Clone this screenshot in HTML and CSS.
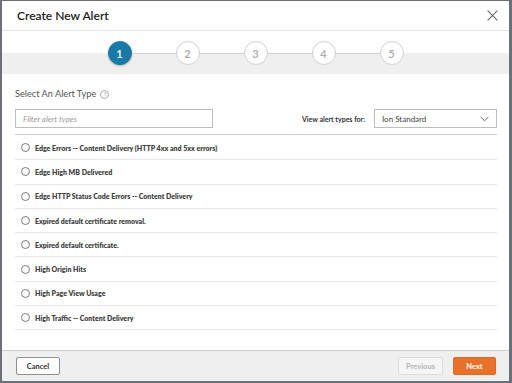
FILE: index.html
```html
<!DOCTYPE html>
<html lang="en">
<head>
    <meta charset="UTF-8">
    <meta name="viewport" content="width=device-width, initial-scale=1.0">
    <title>Create New Alert</title>
    <link rel="stylesheet" href="styles.css">
</head>
<body>
    <div class="modal">
        <div class="modal-header">
            <h1 class="modal-title">Create New Alert</h1>
            <button class="close-btn" aria-label="Close">
                <svg viewBox="0 0 12 12" fill="none" stroke="currentColor" stroke-width="1.2" stroke-linecap="round">
                    <path d="M1 1l10 10M11 1L1 11"></path>
                </svg>
            </button>
        </div>

        <div class="stepper">
            <div class="steps">
                <span class="step active">1</span>
                <span class="connector"></span>
                <span class="step">2</span>
                <span class="connector"></span>
                <span class="step">3</span>
                <span class="connector"></span>
                <span class="step">4</span>
                <span class="connector"></span>
                <span class="step">5</span>
            </div>
        </div>

        <div class="modal-body">
            <div class="section-title">
                Select An Alert Type
                <span class="help">?</span>
            </div>

            <div class="filters">
                <input class="filter-input" type="text" placeholder="Filter alert types">
                <div class="view-for">
                    <span class="view-label">View alert types for:</span>
                    <div class="select">
                        <span>Ion Standard</span>
                        <svg viewBox="0 0 10 6" fill="none" stroke="currentColor" stroke-width="1" stroke-linecap="round" stroke-linejoin="round">
                            <path d="M1 1l4 4 4-4"></path>
                        </svg>
                    </div>
                </div>
            </div>

            <ul class="alert-list">
                <li class="alert-item"><span class="radio"></span>Edge Errors -- Content Delivery (HTTP 4xx and 5xx errors)</li>
                <li class="alert-item"><span class="radio"></span>Edge High MB Delivered</li>
                <li class="alert-item"><span class="radio"></span>Edge HTTP Status Code Errors -- Content Delivery</li>
                <li class="alert-item"><span class="radio"></span>Expired default certificate removal.</li>
                <li class="alert-item"><span class="radio"></span>Expired default certificate.</li>
                <li class="alert-item"><span class="radio"></span>High Origin Hits</li>
                <li class="alert-item"><span class="radio"></span>High Page View Usage</li>
                <li class="alert-item"><span class="radio"></span>High Traffic -- Content Delivery</li>
            </ul>
        </div>

        <div class="modal-footer">
            <button class="btn btn-default">Cancel</button>
            <div class="footer-right">
                <button class="btn btn-disabled" disabled>Previous</button>
                <button class="btn btn-primary">Next</button>
            </div>
        </div>
    </div>
</body>
</html>
```

FILE: styles.css
```css
* {
    margin: 0;
    padding: 0;
    box-sizing: border-box;
    font-family: Lato, 'Open Sans', sans-serif;
}

html, body {
    height: 100%;
}

body {
    background: #6d7175;
    padding: 1px 3px 2px 2px;
    overflow: hidden;
}

.modal {
    height: 100%;
    background: white;
    display: flex;
    flex-direction: column;
}

.modal-header {
    height: 30px;
    display: flex;
    align-items: center;
    justify-content: space-between;
    padding: 0 10px 0 15px;
    border-bottom: 1px solid #e3e3e3;
}

.modal-title {
    font-size: 12px;
    font-weight: 600;
    color: #222;
}

.close-btn {
    border: none;
    background: none;
    color: #666;
    width: 12px;
    height: 12px;
    cursor: pointer;
}

.close-btn svg {
    display: block;
    width: 11px;
    height: 11px;
}

.stepper {
    height: 43px;
    background: linear-gradient(#fff 0 22px, #efefef 22px);
    padding-top: 10px;
}

.steps {
    display: flex;
    align-items: center;
    justify-content: center;
}

.step {
    width: 24px;
    height: 24px;
    border-radius: 50%;
    border: 1px solid #cfcfcf;
    background: white;
    color: #aaa;
    font-size: 11px;
    font-weight: 600;
    display: flex;
    align-items: center;
    justify-content: center;
}

.step.active {
    background: #1a7aa6;
    border-color: #1a7aa6;
    color: white;
    box-shadow: 0 1px 2px rgba(0, 0, 0, 0.25);
}

.connector {
    width: 44px;
    height: 1px;
    background: #cfcfcf;
}

.modal-body {
    flex: 1;
    padding: 13px 12px 0 13px;
}

.section-title {
    font-size: 9.2px;
    color: #555;
    line-height: 14px;
    display: flex;
    align-items: center;
    gap: 4px;
}

.help {
    width: 9px;
    height: 9px;
    border: 1px solid #aaa;
    border-radius: 50%;
    color: #999;
    font-size: 6px;
    display: flex;
    align-items: center;
    justify-content: center;
}

.filters {
    display: flex;
    justify-content: space-between;
    align-items: center;
    margin-top: 8px;
    padding-bottom: 6px;
    border-bottom: 1px solid #cfcfcf;
}

.filter-input {
    width: 198px;
    height: 19px;
    border: 1px solid #bdbdbd;
    padding: 0 7px;
    font-size: 8px;
    font-style: italic;
    color: #333;
    outline: none;
}

.filter-input::placeholder {
    color: #999;
}

.view-for {
    display: flex;
    align-items: center;
    gap: 9px;
}

.view-label {
    font-size: 7px;
    font-weight: 700;
    color: #333;
}

.select {
    width: 123px;
    height: 19px;
    border: 1px solid #bdbdbd;
    padding: 0 7px 0 7px;
    display: flex;
    align-items: center;
    justify-content: space-between;
    font-size: 8px;
    color: #444;
}

.select svg {
    width: 9px;
    height: 6px;
    color: #555;
}

.alert-list {
    list-style: none;
    padding-top: 1px;
}

.alert-item {
    height: 24.3px;
    border-bottom: 1px solid #e6e6e6;
    display: flex;
    align-items: center;
    gap: 5px;
    padding-left: 6px;
    font-size: 7px;
    font-weight: 800;
    color: #444;
}

.radio {
    width: 9px;
    height: 9px;
    border: 1px solid #777;
    border-radius: 50%;
}

.modal-footer {
    height: 31px;
    background: #efefef;
    border-top: 1px solid #cfcfcf;
    padding: 6px 13px 0 14px;
    display: flex;
    justify-content: space-between;
    align-items: flex-start;
}

.footer-right {
    display: flex;
    gap: 10px;
}

.btn {
    height: 18px;
    width: 44px;
    border-radius: 2px;
    font-size: 7.5px;
    font-weight: 700;
    cursor: pointer;
}

.btn-default {
    background: white;
    border: 1px solid #8f8f8f;
    color: #333;
}

.btn-disabled {
    width: 45px;
    background: #f6f6f6;
    border: 1px solid #dcdcdc;
    color: #b5b5b5;
    cursor: not-allowed;
}

.btn-primary {
    width: 43px;
    background: #e8722a;
    border: 1px solid #e0691f;
    color: white;
}
```
